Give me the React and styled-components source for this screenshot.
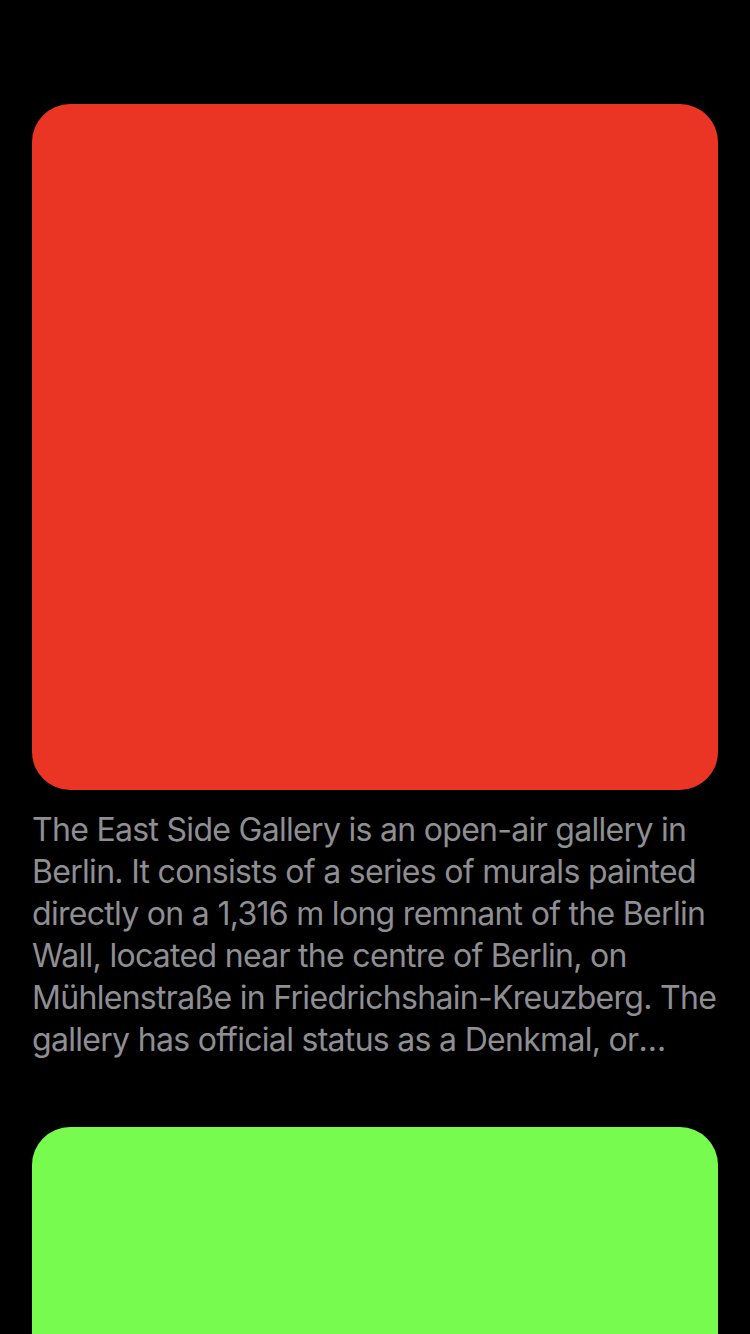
import styled, { createGlobalStyle } from 'styled-components'

const GlobalStyle = createGlobalStyle`
html, body {
  margin: 0;
  padding: 0;
  background: #000;
}
body {
  font-family: Inter, "Liberation Sans", sans-serif;
  -webkit-font-smoothing: antialiased;
}
`

const items = [
  {
    color: '#ea3424',
    text: 'The East Side Gallery is an open-air gallery in Berlin. It consists of a series of murals painted directly on a 1,316 m long remnant of the Berlin Wall, located near the centre of Berlin, on Mühlenstraße in Friedrichshain-Kreuzberg. The gallery has official status as a Denkmal, or heritage-protected landmark.'
  },
  {
    color: '#76fb4e',
    text: 'The Brandenburg Gate is an 18th-century neoclassical monument in Berlin, built on the orders of Prussian king Frederick William II.'
  }
]

const App = () => (
  <>
    <GlobalStyle />
    <Feed>
      {items.map((item, i) => (
        <Card key={i}>
          <Picture $color={item.color} />
          <Caption>{item.text}</Caption>
        </Card>
      ))}
    </Feed>
  </>
)

const Feed = styled.main`
display: flex;
flex-direction: column;
gap: 66px;
padding: 104px 32px 0;
height: 1334px;
box-sizing: border-box;
overflow: hidden;
`

const Card = styled.article`
display: flex;
flex-direction: column;
gap: 19px;
flex-shrink: 0;
`

const Picture = styled.div`
width: 686px;
height: 686px;
border-radius: 38px;
background-color: ${p => p.$color};
`

const Caption = styled.p`
margin: 0;
color: #8e8e93;
font-size: 32px;
line-height: 42px;
letter-spacing: -0.7px;
display: -webkit-box;
-webkit-line-clamp: 6;
-webkit-box-orient: vertical;
overflow: hidden;
`

export default App
